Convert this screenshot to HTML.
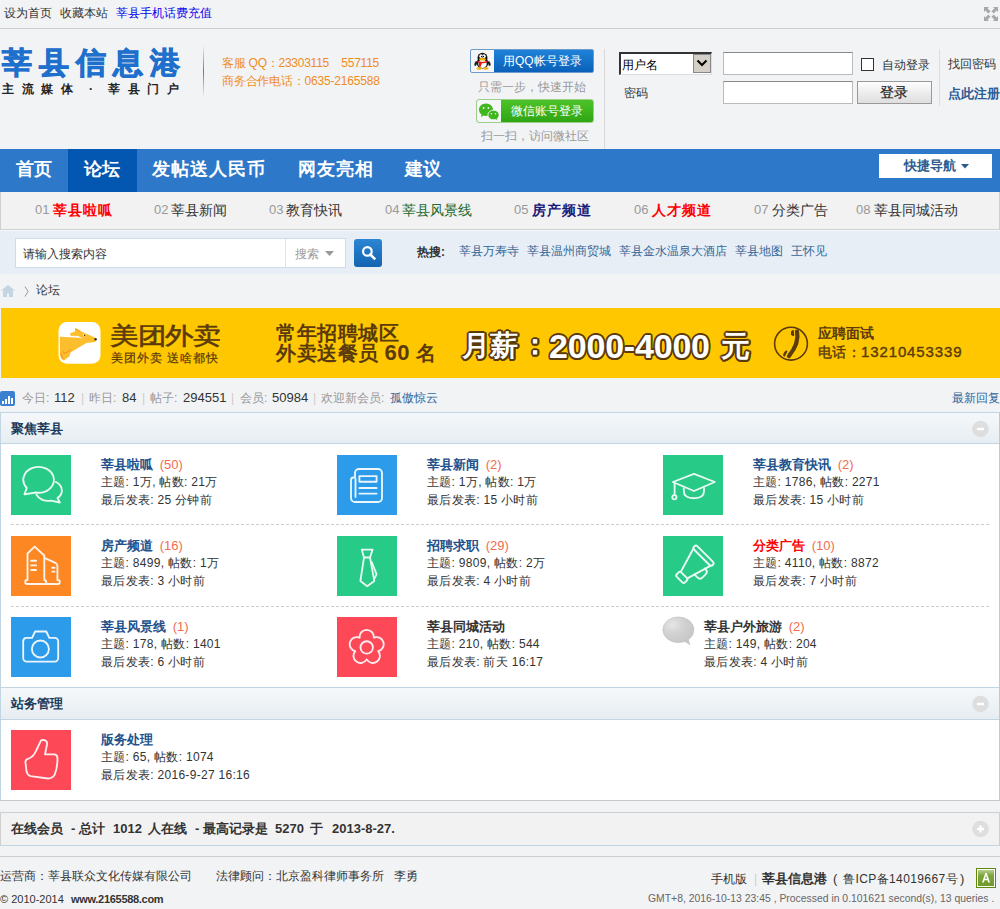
<!DOCTYPE html>
<html><head><meta charset="utf-8">
<style>
*{margin:0;padding:0;box-sizing:border-box}
html,body{width:1000px;height:909px;overflow:hidden}
body{background:#f2f3f5;font-family:"Liberation Sans",sans-serif;font-size:12px;color:#333;position:relative}
.a{position:absolute;white-space:nowrap;line-height:20px}
.b{font-weight:bold}
</style></head><body>

<!-- top bar -->
<div class="a" style="left:0;top:0;width:1000px;height:29px;border-bottom:1px solid #cdcdcd;background:#f2f3f5"></div>
<div class="a" style="left:4px;top:3px;color:#333">设为首页</div>
<div class="a" style="left:60px;top:3px;color:#333">收藏本站</div>
<div class="a" style="left:116px;top:3px;color:#0505ee">莘县手机话费充值</div>

<svg class="a" style="left:984px;top:7px" width="14" height="14" viewBox="0 0 14 14" fill="#a8a8a8">
<path d="M0,0 H5 L3.6,1.4 L6.5,4.3 L4.3,6.5 L1.4,3.6 L0,5 Z"/><path d="M14,0 V5 L12.6,3.6 L9.7,6.5 L7.5,4.3 L10.4,1.4 L9,0 Z"/>
<path d="M0,14 V9 L1.4,10.4 L4.3,7.5 L6.5,9.7 L3.6,12.6 L5,14 Z"/><path d="M14,14 H9 L10.4,12.6 L7.5,9.7 L9.7,7.5 L12.6,10.4 L14,9 Z"/>
</svg>
<!-- header -->
<div class="a" style="left:2px;top:43px;font-size:30px;line-height:40px;color:#1f6fcc;letter-spacing:7px;font-weight:900;-webkit-text-stroke:0.9px #1f6fcc">莘县信息港</div>
<div class="a b" style="left:2px;top:79px;font-size:12px;color:#222;letter-spacing:7.5px">主流媒体</div><div class="a b" style="left:89px;top:79px;font-size:12px;color:#222">·</div><div class="a b" style="left:108px;top:79px;font-size:12px;color:#222;letter-spacing:7.5px">莘县门户</div>
<div class="a" style="left:203px;top:45px;width:1px;height:53px;background:linear-gradient(#f2f3f5,#777,#f2f3f5)"></div>
<div class="a" style="left:222px;top:53px;color:#f08c1e;letter-spacing:-0.25px">客服 QQ：23303115&nbsp;&nbsp;&nbsp;&nbsp;557115</div>
<div class="a" style="left:222px;top:71px;color:#f08c1e;letter-spacing:-0.2px">商务合作电话：0635-2165588</div>

<!-- login buttons -->
<div class="a" style="left:470px;top:49px;width:124px;height:24px;border:1px solid #6d9ccc;border-radius:2px;background:linear-gradient(#1e82d8,#0b60b9);overflow:hidden">
  <div style="position:absolute;left:0;top:0;width:23px;height:22px;background:#f4f6f8"></div>
</div>
<svg class="a" style="left:474px;top:52px" width="17" height="18" viewBox="0 0 17 18">
<ellipse cx="8.5" cy="6" rx="5" ry="5.3" fill="#111"/>
<ellipse cx="8.5" cy="11" rx="5.8" ry="5.5" fill="#111"/>
<ellipse cx="8.5" cy="11.8" rx="4.2" ry="4.3" fill="#fff"/>
<ellipse cx="7" cy="4.2" rx="1.7" ry="1.9" fill="#fff"/><ellipse cx="10" cy="4.2" rx="1.7" ry="1.9" fill="#fff"/>
<circle cx="7.6" cy="4.5" r="0.7" fill="#000"/><circle cx="9.4" cy="4.5" r="0.7" fill="#000"/>
<ellipse cx="8.5" cy="7.2" rx="3.4" ry="1.3" fill="#f7b500"/>
<path d="M3.2,8.6 Q8.5,11.5 13.8,8.6 L13.8,10 Q8.5,12.5 3.2,10 Z" fill="#e8160e"/>
<path d="M5,10.5 L8,10.8 L6.5,15 L5,14.5 Z" fill="#e8160e"/>
<ellipse cx="1.8" cy="11.5" rx="1.2" ry="2.5" fill="#222" transform="rotate(20 1.8 11.5)"/><ellipse cx="15.2" cy="11.5" rx="1.2" ry="2.5" fill="#222" transform="rotate(-20 15.2 11.5)"/>
<ellipse cx="5" cy="16.5" rx="2.6" ry="1.3" fill="#f7b500"/><ellipse cx="12" cy="16.5" rx="2.6" ry="1.3" fill="#f7b500"/>
</svg>
<div class="a" style="left:503px;top:51px;color:#fff">用QQ帐号登录</div>
<div class="a" style="left:478px;top:77px;color:#999">只需一步，快速开始</div>
<div class="a" style="left:476px;top:99px;width:118px;height:24px;border:1px solid #9bcf8a;border-radius:3px;background:linear-gradient(#4cc22a,#2fa512);overflow:hidden">
  <div style="position:absolute;left:0;top:0;width:24px;height:22px;background:#f4f6f8"></div>
</div>
<svg class="a" style="left:478px;top:102px" width="22" height="19" viewBox="0 0 22 19">
<path d="M8,1.5 C4,1.5 1,4.3 1,7.8 C1,9.8 2,11.5 3.5,12.6 L3,15 L5.8,13.6 C6.5,13.8 7.2,13.9 8,13.9 C12,13.9 15,11.2 15,7.8 C15,4.3 12,1.5 8,1.5 Z" fill="#41b71f"/>
<path d="M15.5,8.2 C12.4,8.2 9.9,10.3 9.9,13 C9.9,15.7 12.4,17.8 15.5,17.8 C16.1,17.8 16.7,17.7 17.2,17.6 L19.5,18.7 L19.1,16.8 C20.4,15.9 21.2,14.5 21.2,13 C21.2,10.3 18.7,8.2 15.5,8.2 Z" fill="#41b71f" stroke="#fff" stroke-width="0.8"/>
<circle cx="5.6" cy="5.9" r="0.9" fill="#fff"/><circle cx="10.4" cy="5.9" r="0.9" fill="#fff"/>
<circle cx="13.4" cy="11.7" r="0.7" fill="#fff"/><circle cx="17.5" cy="11.7" r="0.7" fill="#fff"/>
</svg>
<div class="a" style="left:511px;top:101px;color:#fff">微信账号登录</div>
<div class="a" style="left:481px;top:126px;color:#999">扫一扫，访问微社区</div>
<div class="a" style="left:604px;top:49px;width:1px;height:100px;background:#d8d8d8"></div>

<!-- login form -->
<div class="a" style="left:619px;top:52px;width:93px;height:23px;background:#fff;border-top:2px solid #333;border-left:2px solid #333;border-right:1px solid #ddd;border-bottom:1px solid #ddd"></div>
<div class="a" style="left:693px;top:54px;width:18px;height:19px;background:#d4d0c8;border:1px solid #888"></div>
<svg class="a" style="left:696px;top:58px" width="12" height="10" viewBox="0 0 12 10"><path d="M1.5,2.5 L6,7 L10.5,2.5" fill="none" stroke="#000" stroke-width="2"/></svg>
<div class="a" style="left:622px;top:55px;color:#000">用户名</div>
<div class="a" style="left:723px;top:52px;width:130px;height:23px;background:#fff;border:1px solid #bbb;border-top-color:#888"></div>
<div class="a" style="left:723px;top:81px;width:130px;height:23px;background:#fff;border:1px solid #bbb;border-top-color:#888"></div>
<div class="a" style="left:624px;top:83px;color:#333">密码</div>
<div class="a" style="left:861px;top:58px;width:13px;height:13px;background:#fff;border:1px solid #333"></div>
<div class="a" style="left:882px;top:55px;color:#333">自动登录</div>
<div class="a" style="left:857px;top:81px;width:75px;height:23px;border:1px solid #999;background:linear-gradient(#fdfdfd,#dedede)"></div>
<div class="a" style="left:880px;top:82px;color:#222;font-size:14px;-webkit-text-stroke:0.2px #222">登录</div>
<div class="a" style="left:939px;top:49px;width:1px;height:57px;background:#d8dde6"></div>
<div class="a" style="left:948px;top:54px;color:#333">找回密码</div>
<div class="a b" style="left:948px;top:84px;color:#2b5a95;font-size:13px">点此注册</div>

<!-- nav -->
<div class="a" style="left:0;top:149px;width:1000px;height:43px;background:#2d78c9"></div>
<div class="a" style="left:68px;top:149px;width:69px;height:43px;background:#0457b0"></div>
<div class="a b" style="left:16px;top:159px;font-size:18px;color:#fff">首页</div>
<div class="a b" style="left:84px;top:159px;font-size:18px;color:#fff">论坛</div>
<div class="a b" style="left:152px;top:159px;font-size:18px;color:#fff;letter-spacing:1px">发帖送人民币</div>
<div class="a b" style="left:298px;top:159px;font-size:18px;color:#fff;letter-spacing:1px">网友亮相</div>
<div class="a b" style="left:405px;top:159px;font-size:18px;color:#fff">建议</div>
<div class="a" style="left:879px;top:154px;width:113px;height:24px;background:#fff"></div>
<div class="a b" style="left:904px;top:156px;color:#2b5b8e;font-size:13px">快捷导航</div>
<svg class="a" style="left:961px;top:164px" width="8" height="5" viewBox="0 0 8 5"><path d="M0,0 H8 L4,4.5 Z" fill="#2b5b8e"/></svg>

<!-- subnav -->
<div class="a" style="left:0;top:192px;width:1000px;height:38px;background:#f2f2f2;border:1px solid #cfcfcf;border-top:0"></div>

<!-- subnav items -->
<div class="a" style="left:35px;top:200px;color:#999;font-size:13px">01</div>
<div class="a b" style="left:53px;top:200px;color:#f00;font-size:14px;letter-spacing:1px">莘县啦呱</div>
<div class="a" style="left:154px;top:200px;color:#999;font-size:13px">02</div>
<div class="a" style="left:171px;top:200px;color:#333;font-size:14px">莘县新闻</div>
<div class="a" style="left:269px;top:200px;color:#999;font-size:13px">03</div>
<div class="a" style="left:286px;top:200px;color:#333;font-size:14px">教育快讯</div>
<div class="a" style="left:385px;top:200px;color:#999;font-size:13px">04</div>
<div class="a" style="left:402px;top:200px;color:#216b31;font-size:14px">莘县风景线</div>
<div class="a" style="left:514px;top:200px;color:#999;font-size:13px">05</div>
<div class="a b" style="left:532px;top:200px;color:#1a1a7a;font-size:14px;letter-spacing:1px">房产频道</div>
<div class="a" style="left:634px;top:200px;color:#999;font-size:13px">06</div>
<div class="a b" style="left:652px;top:200px;color:#f00;font-size:14px;letter-spacing:1px">人才频道</div>
<div class="a" style="left:754px;top:200px;color:#999;font-size:13px">07</div>
<div class="a" style="left:772px;top:200px;color:#333;font-size:14px">分类广告</div>
<div class="a" style="left:856px;top:200px;color:#999;font-size:13px">08</div>
<div class="a" style="left:874px;top:200px;color:#333;font-size:14px">莘县同城活动</div>

<!-- search band -->
<div class="a" style="left:0;top:230px;width:1000px;height:1px;background:#fafafa"></div><div class="a" style="left:0;top:231px;width:1000px;height:43px;background:#e8eef5"></div>
<div class="a" style="left:15px;top:238px;width:331px;height:30px;background:#fff;border:1px solid #cfdbe6"></div>
<div class="a" style="left:285px;top:239px;width:1px;height:28px;background:#dde5ec"></div>
<div class="a" style="left:23px;top:244px;color:#333;font-size:12px">请输入搜索内容</div>
<div class="a" style="left:295px;top:244px;color:#999">搜索</div>
<div class="a" style="left:354px;top:239px;width:28px;height:28px;border-radius:3px;background:linear-gradient(#2c86d3,#1364b0)"></div>
<svg class="a" style="left:325px;top:251px" width="9" height="5" viewBox="0 0 9 5"><path d="M0,0 H9 L4.5,5 Z" fill="#999"/></svg>
<svg class="a" style="left:354px;top:239px" width="28" height="28" viewBox="0 0 28 28"><circle cx="13.4" cy="12.4" r="4.3" fill="none" stroke="#fff" stroke-width="2.2"/><path d="M16.3,15.5 L20.3,19.5" stroke="#fff" stroke-width="2.6" stroke-linecap="square"/></svg>
<div class="a b" style="left:417px;top:242px;color:#333">热搜:</div>

<!-- hot links -->
<div class="a" style="left:459px;top:241px;color:#336699">莘县万寿寺</div>
<div class="a" style="left:527px;top:241px;color:#336699">莘县温州商贸城</div>
<div class="a" style="left:619px;top:241px;color:#336699">莘县金水温泉大酒店</div>
<div class="a" style="left:735px;top:241px;color:#336699">莘县地图</div>
<div class="a" style="left:791px;top:241px;color:#336699">王怀见</div>


<!-- breadcrumb -->
<svg class="a" style="left:0;top:284px" width="17" height="14" viewBox="0 0 17 14"><path d="M1,6.6 L8,1 L15,6.6 Z" fill="#c3d5e3"/><path d="M3,6 H13 V13 H9 V9.5 H7 V13 H3 Z" fill="#c3d5e3"/></svg>
<svg class="a" style="left:24px;top:286px" width="6" height="11" viewBox="0 0 6 11"><path d="M1,0.5 L4,5.5 L1,10.5" fill="none" stroke="#999" stroke-width="1"/></svg>
<div class="a" style="left:36px;top:280px;color:#333">论坛</div>

<!-- banner -->
<div class="a" style="left:1px;top:308px;width:999px;height:70px;background:#fec700"></div>
<svg class="a" style="left:58px;top:322px" width="43" height="42" viewBox="0 0 43 42">
 <rect x="0.5" y="0" width="42" height="41.7" rx="8.5" fill="#fff"/>
 <path d="M1.8,14.8 L21,15.8 L28.5,17.5 L36.8,15.6 Q39.5,17.5 37,20 L28.3,21 L12.5,30.5 L11.6,34.2 L5.9,38.5 Q2.2,37 2,31.7 Z" fill="#fdbe2e"/>
 <path d="M17.2,5.8 L25,10.3 L36.8,15.4 L36.8,17.5 L28.3,18.5 L21,14.6 L13.8,14.3 Q11.4,13.3 12.6,11 L16.8,9.8 Z" fill="#fdbe2e"/>
 <path d="M13.8,14.3 L21,14.6" stroke="#fff" stroke-width="0.8"/>
 <path d="M2.6,31 L4.8,37 M4.5,29.5 L6.8,31.2 L13.5,27.5" stroke="#f99a1c" stroke-width="1.3" fill="none"/>
 <path d="M18,7.2 L21.5,9.4" stroke="#f99a1c" stroke-width="1"/>
 <circle cx="26.3" cy="13.3" r="1.3" fill="#fff"/><circle cx="26.6" cy="13.4" r="0.8" fill="#3a2a10"/><circle cx="37.6" cy="17.3" r="1.2" fill="#3a2a10"/>
</svg>
<div class="a" style="left:110px;top:316px;font-size:28px;line-height:38px;transform:scaleY(0.84);transform-origin:0 31px;color:#5b3a0b;letter-spacing:-0.5px;-webkit-text-stroke:0.7px #5b3a0b">美团外卖</div>
<div class="a" style="left:111px;top:348px;font-size:12px;line-height:20px;color:#5b3a0b;letter-spacing:1px;-webkit-text-stroke:0.2px #5b3a0b">美团外卖 送啥都快</div>
<div class="a b" style="left:276px;top:320px;font-size:20px;line-height:26px;color:#5b3a0b;letter-spacing:0.5px">常年招聘城区</div>
<div class="a b" style="left:276px;top:340px;font-size:20px;line-height:26px;color:#5b3a0b;letter-spacing:0.5px">外卖送餐员 <span style="font-size:22px">60</span> 名</div>
<div class="a b" style="left:462px;top:325px;font-size:28px;color:#fff;text-shadow:-1.6px 0px 0 #5b3a0b,1.6px 0px 0 #5b3a0b,0px -1.6px 0 #5b3a0b,0px 1.6px 0 #5b3a0b,-1.1px -1.1px 0 #5b3a0b,1.1px -1.1px 0 #5b3a0b,-1.1px 1.1px 0 #5b3a0b,1.1px 1.1px 0 #5b3a0b,-0.8px -1.5px 0 #5b3a0b,0.8px -1.5px 0 #5b3a0b,-0.8px 1.5px 0 #5b3a0b,0.8px 1.5px 0 #5b3a0b,-1.5px -0.8px 0 #5b3a0b,1.5px -0.8px 0 #5b3a0b,-1.5px 0.8px 0 #5b3a0b,1.5px 0.8px 0 #5b3a0b;line-height:42px">月薪</div><div class="a b" style="left:521px;top:324px;font-size:28px;color:#fff;text-shadow:-1.6px 0px 0 #5b3a0b,1.6px 0px 0 #5b3a0b,0px -1.6px 0 #5b3a0b,0px 1.6px 0 #5b3a0b,-1.1px -1.1px 0 #5b3a0b,1.1px -1.1px 0 #5b3a0b,-1.1px 1.1px 0 #5b3a0b,1.1px 1.1px 0 #5b3a0b,-0.8px -1.5px 0 #5b3a0b,0.8px -1.5px 0 #5b3a0b,-0.8px 1.5px 0 #5b3a0b,0.8px 1.5px 0 #5b3a0b,-1.5px -0.8px 0 #5b3a0b,1.5px -0.8px 0 #5b3a0b,-1.5px 0.8px 0 #5b3a0b,1.5px 0.8px 0 #5b3a0b;line-height:42px">：</div><div class="a b" style="left:549px;top:325px;font-size:34px;letter-spacing:-0.2px;color:#fff;text-shadow:-1.6px 0px 0 #5b3a0b,1.6px 0px 0 #5b3a0b,0px -1.6px 0 #5b3a0b,0px 1.6px 0 #5b3a0b,-1.1px -1.1px 0 #5b3a0b,1.1px -1.1px 0 #5b3a0b,-1.1px 1.1px 0 #5b3a0b,1.1px 1.1px 0 #5b3a0b,-0.8px -1.5px 0 #5b3a0b,0.8px -1.5px 0 #5b3a0b,-0.8px 1.5px 0 #5b3a0b,0.8px 1.5px 0 #5b3a0b,-1.5px -0.8px 0 #5b3a0b,1.5px -0.8px 0 #5b3a0b,-1.5px 0.8px 0 #5b3a0b,1.5px 0.8px 0 #5b3a0b;line-height:42px">2000-4000</div><div class="a b" style="left:721px;top:325px;font-size:29px;color:#fff;text-shadow:-1.6px 0px 0 #5b3a0b,1.6px 0px 0 #5b3a0b,0px -1.6px 0 #5b3a0b,0px 1.6px 0 #5b3a0b,-1.1px -1.1px 0 #5b3a0b,1.1px -1.1px 0 #5b3a0b,-1.1px 1.1px 0 #5b3a0b,1.1px 1.1px 0 #5b3a0b,-0.8px -1.5px 0 #5b3a0b,0.8px -1.5px 0 #5b3a0b,-0.8px 1.5px 0 #5b3a0b,0.8px 1.5px 0 #5b3a0b,-1.5px -0.8px 0 #5b3a0b,1.5px -0.8px 0 #5b3a0b,-1.5px 0.8px 0 #5b3a0b,1.5px 0.8px 0 #5b3a0b;line-height:42px">元</div>
<svg class="a" style="left:770px;top:322px" width="42" height="42" viewBox="0 0 42 42">
 <circle cx="21" cy="21.7" r="16.4" fill="none" stroke="#5b3a0b" stroke-width="1.6"/>
 <path d="M27,9.5 Q29.5,21 19,34" fill="none" stroke="#5b3a0b" stroke-width="4.2" stroke-linecap="round"/>
 <path d="M21,9.8 Q21.5,7.8 23.8,8 L24.2,13.8 Q22,14.5 21,12.5 Z" fill="#5b3a0b"/>
 <path d="M13,33.5 Q13.5,29.5 16.8,28.3 L17.5,29.8 Q15.5,32.5 14.8,34.8 Z" fill="#5b3a0b"/>
</svg>
<div class="a b" style="left:818px;top:323px;font-size:14px;line-height:20px;color:#5b3a0b">应聘面试</div>
<div class="a" style="left:818px;top:342px;font-size:14px;line-height:20px;color:#5b3a0b;letter-spacing:0.3px;-webkit-text-stroke:0.4px #5b3a0b">电话：<span style="font-size:15px;letter-spacing:0.9px">13210453339</span></div>

<!-- stats -->
<svg class="a" style="left:0;top:391px" width="15" height="15" viewBox="0 0 15 15"><rect width="15" height="15" rx="2" fill="#3b80d0"/><rect x="2" y="10" width="2" height="3" fill="#fff"/><rect x="5" y="8" width="2" height="5" fill="#fff"/><rect x="8" y="5" width="2" height="8" fill="#fff"/><rect x="11" y="7" width="2" height="6" fill="#fff"/></svg>

<div class="a" style="left:22px;top:388px;color:#999;">今日:</div><div class="a" style="left:54px;top:388px;color:#333;font-size:13px;">112</div><div class="a" style="left:81px;top:388px;color:#ccc;">|</div><div class="a" style="left:89px;top:388px;color:#999;">昨日:</div><div class="a" style="left:122px;top:388px;color:#333;font-size:13px;">84</div><div class="a" style="left:142px;top:388px;color:#ccc;">|</div><div class="a" style="left:150px;top:388px;color:#999;">帖子:</div><div class="a" style="left:183px;top:388px;color:#333;font-size:13px;">294551</div><div class="a" style="left:231px;top:388px;color:#ccc;">|</div><div class="a" style="left:240px;top:388px;color:#999;">会员:</div><div class="a" style="left:272px;top:388px;color:#333;font-size:13px;">50984</div><div class="a" style="left:313px;top:388px;color:#ccc;">|</div><div class="a" style="left:321px;top:388px;color:#999;">欢迎新会员:</div><div class="a" style="left:390px;top:388px;color:#336699;">孤傲惊云</div>
<div class="a" style="left:952px;top:388px;color:#336699">最新回复</div>

<!-- forum box -->
<div class="a" style="left:0;top:412px;width:1000px;height:389px;background:#fff;border:1px solid #c2d5e3;border-bottom-color:#c8c8c8;border-right-color:#c8c8c8"></div>
<div class="a" style="left:1px;top:413px;width:998px;height:31px;background:linear-gradient(#f5f8fa,#e6edf2);border-bottom:1px solid #c2d5e3"></div>
<div class="a b" style="left:11px;top:419px;color:#1c3b5a;font-size:13px">聚焦莘县</div>
<svg class="a" style="left:972px;top:420px" width="18" height="18" viewBox="0 0 18 18"><circle cx="8.5" cy="9" r="8.3" fill="#dedede"/><rect x="5" y="7.8" width="7" height="2.4" fill="#fff"/></svg>
<div class="a" style="left:1px;top:687px;width:998px;height:33px;background:linear-gradient(#f5f8fa,#e6edf2);border-top:1px solid #c2d5e3;border-bottom:1px solid #c2d5e3"></div>
<div class="a b" style="left:11px;top:694px;color:#1c3b5a;font-size:13px">站务管理</div>
<svg class="a" style="left:972px;top:695px" width="18" height="18" viewBox="0 0 18 18"><circle cx="8.5" cy="9" r="8.3" fill="#dedede"/><rect x="5" y="7.8" width="7" height="2.4" fill="#fff"/></svg>

<svg class="a" style="left:11px;top:455px" width="60" height="60" viewBox="0 0 60 60"><rect width="60" height="60" fill="#27cb87"/><g fill="none" stroke="#fff" stroke-width="1.85" stroke-linejoin="round" stroke-linecap="round" opacity="0.9"><path d="M15.8,33 L13.5,39.3 L25,37.5 A15.3,12.9 0 1 0 15.8,33 Z"/><path d="M44.9,27 A12.7,10 0 0 1 46.5,43 L48.8,47.5 L40,45.6 A12.7,10 0 0 1 25.5,39.8"/></g></svg>
<div class="a b" style="left:101px;top:455px;color:#22518c;font-size:13px;line-height:20px">莘县啦呱 <span style="color:#f26c4f;font-weight:normal;margin-left:3px">(50)</span></div>
<div class="a" style="left:101px;top:472px;color:#333;letter-spacing:0.3px">主题: 1万, 帖数: 21万</div>
<div class="a" style="left:101px;top:490px;color:#333;letter-spacing:0.3px">最后发表: 25 分钟前</div>
<svg class="a" style="left:337px;top:455px" width="60" height="60" viewBox="0 0 60 60"><rect width="60" height="60" fill="#2c9bea"/><g fill="none" stroke="#fff" stroke-width="1.85" stroke-linejoin="round" stroke-linecap="round" opacity="0.9"><path d="M18,22.5 V18 A4,4 0 0 1 22,14 H41 A4,4 0 0 1 45,18 V43 A4,4 0 0 1 41,47 H18 A4,4 0 0 1 14,43 V25 A2.5,2.5 0 0 1 16.5,22.5 H18"/><path d="M18.5,24 V42"/><rect x="22.4" y="21.1" width="17.2" height="5.6"/><path d="M22.4,33 H39.6 M22.4,38.6 H39.6"/></g></svg>
<div class="a b" style="left:427px;top:455px;color:#22518c;font-size:13px;line-height:20px">莘县新闻 <span style="color:#f26c4f;font-weight:normal;margin-left:3px">(2)</span></div>
<div class="a" style="left:427px;top:472px;color:#333;letter-spacing:0.3px">主题: 1万, 帖数: 1万</div>
<div class="a" style="left:427px;top:490px;color:#333;letter-spacing:0.3px">最后发表: 15 小时前</div>
<svg class="a" style="left:663px;top:455px" width="60" height="60" viewBox="0 0 60 60"><rect width="60" height="60" fill="#27cb87"/><g fill="none" stroke="#fff" stroke-width="1.85" stroke-linejoin="round" stroke-linecap="round" opacity="0.9"><path d="M31,18.8 L51.8,27 L31,36 L9.9,27 Z"/><path d="M11.6,28.4 V40"/><circle cx="11.4" cy="42.2" r="2.1"/><path d="M20.8,33 V36 Q20.8,43.2 31,43.2 Q41,43.2 41,36 V33"/></g></svg>
<div class="a b" style="left:753px;top:455px;color:#22518c;font-size:13px;line-height:20px">莘县教育快讯 <span style="color:#f26c4f;font-weight:normal;margin-left:3px">(2)</span></div>
<div class="a" style="left:753px;top:472px;color:#333;letter-spacing:0.3px">主题: 1786, 帖数: 2271</div>
<div class="a" style="left:753px;top:490px;color:#333;letter-spacing:0.3px">最后发表: 15 小时前</div>
<svg class="a" style="left:11px;top:536px" width="60" height="60" viewBox="0 0 60 60"><rect width="60" height="60" fill="#fd8722"/><g fill="none" stroke="#fff" stroke-width="1.85" stroke-linejoin="round" stroke-linecap="round" opacity="0.9"><path d="M16.5,44 V17.5 L23.6,10.6 L33.3,19.5 V21.8 L44.5,26.8 Q46.4,27.8 46.4,30 V44 H47 Q48.8,44 48.8,46 Q48.8,48 47,48 H16 Q14.2,48 14.2,46 Q14.2,44 16,44 Z"/><path d="M33.3,21.8 V44 Q35.3,44.3 35.3,46.5 V48"/><path d="M20.1,24.75 H25.1 M20.1,29.4 H25.1 M20.1,34 H25.1 M41.3,31.7 H43.6 M41.3,35.6 H43.6"/></g></svg>
<div class="a b" style="left:101px;top:536px;color:#22518c;font-size:13px;line-height:20px">房产频道 <span style="color:#f26c4f;font-weight:normal;margin-left:3px">(16)</span></div>
<div class="a" style="left:101px;top:553px;color:#333;letter-spacing:0.3px">主题: 8499, 帖数: 1万</div>
<div class="a" style="left:101px;top:571px;color:#333;letter-spacing:0.3px">最后发表: 3 小时前</div>
<svg class="a" style="left:337px;top:536px" width="60" height="60" viewBox="0 0 60 60"><rect width="60" height="60" fill="#27cb87"/><g fill="none" stroke="#fff" stroke-width="1.85" stroke-linejoin="round" stroke-linecap="round" opacity="0.9"><path d="M24.75,13.6 H35.6 L33,21.5 H27 Z"/><path d="M27,21.5 L23.4,44.9 L30.2,50.2 L37.3,44.9 L33,21.5"/><path d="M34.7,26 L39.6,38.3 L37.6,42.2"/></g></svg>
<div class="a b" style="left:427px;top:536px;color:#22518c;font-size:13px;line-height:20px">招聘求职 <span style="color:#f26c4f;font-weight:normal;margin-left:3px">(29)</span></div>
<div class="a" style="left:427px;top:553px;color:#333;letter-spacing:0.3px">主题: 9809, 帖数: 2万</div>
<div class="a" style="left:427px;top:571px;color:#333;letter-spacing:0.3px">最后发表: 4 小时前</div>
<svg class="a" style="left:663px;top:536px" width="60" height="60" viewBox="0 0 60 60"><rect width="60" height="60" fill="#27cb87"/><g fill="none" stroke="#fff" stroke-width="1.85" stroke-linejoin="round" stroke-linecap="round" opacity="0.9" transform="translate(29.2 31) rotate(-45) scale(1.05) translate(-31 -30)"><rect x="44" y="17.5" width="4.5" height="25" rx="2.2"/><path d="M44,18.5 L20,25.6 M44,41.5 L20,34.4"/><rect x="14" y="24.5" width="6" height="11" rx="1.8"/><path d="M27.5,36.4 V40.5 Q27.5,44 31,44 H35 Q38.5,44 38.5,40.5 V39.6"/></g></svg>
<div class="a b" style="left:753px;top:536px;color:#f00;font-size:13px;line-height:20px">分类广告 <span style="color:#f26c4f;font-weight:normal;margin-left:3px">(10)</span></div>
<div class="a" style="left:753px;top:553px;color:#333;letter-spacing:0.3px">主题: 4110, 帖数: 8872</div>
<div class="a" style="left:753px;top:571px;color:#333;letter-spacing:0.3px">最后发表: 7 小时前</div>
<svg class="a" style="left:11px;top:617px" width="60" height="60" viewBox="0 0 60 60"><rect width="60" height="60" fill="#2c9bea"/><g fill="none" stroke="#fff" stroke-width="1.85" stroke-linejoin="round" stroke-linecap="round" opacity="0.9"><path d="M15.5,20.8 H21.1 L24.1,14.5 H35.3 L38.3,20.8 H43.7 A3.5,3.5 0 0 1 47.2,24.3 V41.1 A3.5,3.5 0 0 1 43.7,44.6 H15.7 A3.5,3.5 0 0 1 12.2,41.1 V24.3 A3.5,3.5 0 0 1 15.5,20.8 Z"/><circle cx="29.4" cy="32" r="8.5"/></g></svg>
<div class="a b" style="left:101px;top:617px;color:#22518c;font-size:13px;line-height:20px">莘县风景线 <span style="color:#f26c4f;font-weight:normal;margin-left:3px">(1)</span></div>
<div class="a" style="left:101px;top:634px;color:#333;letter-spacing:0.3px">主题: 178, 帖数: 1401</div>
<div class="a" style="left:101px;top:652px;color:#333;letter-spacing:0.3px">最后发表: 6 小时前</div>
<svg class="a" style="left:337px;top:617px" width="60" height="60" viewBox="0 0 60 60"><rect width="60" height="60" fill="#fd4858"/><g fill="none" stroke="#fff" stroke-width="1.85" stroke-linejoin="round" stroke-linecap="round" opacity="0.9"><path d="M22.65,20.69 A7.09,7.09 0 1 1 36.75,20.69 A7.09,7.09 0 1 1 41.11,34.11 A7.09,7.09 0 1 1 29.70,42.40 A7.09,7.09 0 1 1 18.29,34.11 A7.09,7.09 0 1 1 22.65,20.69 Z"/><circle cx="29.7" cy="30.4" r="6.2"/></g></svg>
<div class="a b" style="left:427px;top:617px;color:#333;font-size:13px;line-height:20px">莘县同城活动</div>
<div class="a" style="left:427px;top:634px;color:#333;letter-spacing:0.3px">主题: 210, 帖数: 544</div>
<div class="a" style="left:427px;top:652px;color:#333;letter-spacing:0.3px">最后发表: 前天 16:17</div>
<div class="a b" style="left:704px;top:617px;color:#333;font-size:13px;line-height:20px">莘县户外旅游 <span style="color:#f26c4f;font-weight:normal;margin-left:3px">(2)</span></div>
<div class="a" style="left:704px;top:634px;color:#333;letter-spacing:0.3px">主题: 149, 帖数: 204</div>
<div class="a" style="left:704px;top:652px;color:#333;letter-spacing:0.3px">最后发表: 4 小时前</div>
<svg class="a" style="left:11px;top:730px" width="60" height="60" viewBox="0 0 60 60"><rect width="60" height="60" fill="#fd4858"/><g fill="none" stroke="#fff" stroke-width="1.85" stroke-linejoin="round" stroke-linecap="round" opacity="0.9"><path d="M30,10.4 Q31.5,9.8 33.5,10.2 Q36.5,11.2 36,14.5 L34,24.4 H43.6 Q46.5,24.8 46.5,28.4 Q46.5,38 43.6,44.9 Q41.5,48.5 37,48.5 L19.5,46.2 Q16,45 15.5,41 L14.4,32 Q14.6,29.5 17,28.8 Q22.5,27 25,21 Z"/></g></svg>
<div class="a b" style="left:101px;top:730px;color:#22518c;font-size:13px;line-height:20px">版务处理</div>
<div class="a" style="left:101px;top:747px;color:#333;letter-spacing:0.3px">主题: 65, 帖数: 1074</div>
<div class="a" style="left:101px;top:765px;color:#333;letter-spacing:0.3px">最后发表: 2016-9-27 16:16</div>
<div class="a" style="left:11px;top:524px;width:978px;height:0;border-top:1px dashed #cdcdcd"></div>
<div class="a" style="left:11px;top:606px;width:978px;height:0;border-top:1px dashed #cdcdcd"></div>

<svg class="a" style="left:660px;top:614px" width="40" height="36" viewBox="0 0 40 36"><defs><radialGradient id="gb" cx="0.3" cy="0.3" r="0.8"><stop offset="0" stop-color="#e6e6e6"/><stop offset="0.45" stop-color="#d2d2d2"/><stop offset="1" stop-color="#c6c6c6"/></radialGradient></defs><path d="M23.5,27 L30.5,31.5 L28,23 Z" fill="#c8c8c8"/><ellipse cx="18.4" cy="15.8" rx="15.5" ry="12.8" fill="url(#gb)" stroke="#c4c4c4" stroke-width="0.8"/></svg>
<!-- online -->
<div class="a" style="left:0;top:812px;width:1000px;height:34px;background:#f2f2f2;border:1px solid #cfcfcf;border-bottom-color:#c2d5e3"></div>
<div class="a b" style="left:11px;top:819px;color:#333;font-size:13px">在线会员</div><div class="a b" style="left:71px;top:819px;color:#333;font-size:13px">-</div><div class="a b" style="left:79px;top:819px;color:#333;font-size:13px">总计</div><div class="a b" style="left:113px;top:819px;color:#333;font-size:13px">1012</div><div class="a b" style="left:148px;top:819px;color:#333;font-size:13px">人在线</div><div class="a b" style="left:195px;top:819px;color:#333;font-size:13px">-</div><div class="a b" style="left:203px;top:819px;color:#333;font-size:13px">最高记录是</div><div class="a b" style="left:275px;top:819px;color:#333;font-size:13px">5270</div><div class="a b" style="left:310px;top:819px;color:#333;font-size:13px">于</div><div class="a b" style="left:332px;top:819px;color:#333;font-size:13px">2013-8-27.</div>

<svg class="a" style="left:972px;top:820px" width="18" height="18" viewBox="0 0 18 18"><circle cx="8.5" cy="9" r="8.3" fill="#dedede"/><rect x="5" y="7.8" width="7" height="2.4" fill="#fff"/><rect x="7.3" y="5.5" width="2.4" height="7" fill="#fff"/></svg>
<!-- footer -->
<div class="a" style="left:0;top:856px;width:1000px;height:1px;background:#cdcdcd"></div>

<div class="a" style="left:0;top:866px;color:#333">运营商：莘县联众文化传媒有限公司</div>
<div class="a" style="left:216px;top:866px;color:#333">法律顾问：北京盈科律师事务所&nbsp;&nbsp;&nbsp;李勇</div>
<div class="a" style="left:0;top:889px;color:#333;font-size:11px">© 2010-2014</div><div class="a b" style="left:71px;top:889px;color:#333;font-size:11px;letter-spacing:-0.3px">www.2165588.com</div>
<div class="a" style="left:711px;top:869px;color:#333">手机版</div><div class="a" style="left:754px;top:869px;color:#ccc">|</div><div class="a b" style="left:762px;top:869px;color:#333;font-size:13px">莘县信息港</div><div class="a" style="left:833px;top:869px;color:#333;font-size:13px">(</div><div class="a" style="left:843px;top:869px;color:#333;font-size:12px;letter-spacing:0.4px">鲁ICP备14019667号</div><div class="a" style="left:960px;top:869px;color:#333;font-size:13px">)</div>
<svg class="a" style="left:976px;top:868px" width="20" height="20" viewBox="0 0 20 20"><rect x="0.5" y="0.5" width="19" height="19" fill="#fff" stroke="#5e8a0a"/><defs><linearGradient id="ag" x1="0" y1="0" x2="0" y2="1"><stop offset="0" stop-color="#b9cf8e"/><stop offset="0.35" stop-color="#7ea53c"/><stop offset="1" stop-color="#6f9a2c"/></linearGradient></defs><rect x="2" y="2" width="16" height="16" fill="url(#ag)"/><path d="M6,14.5 L9.3,5 H10.7 L14,14.5 H12.2 L11.5,12.3 H8.5 L7.8,14.5 Z M9,10.8 H11 L10,7.6 Z" fill="#fff"/></svg>
<div class="a" style="left:648px;top:889px;color:#666;font-size:10.4px">GMT+8, 2016-10-13 23:45 , Processed in 0.101621 second(s), 13 queries .</div>

</body></html>
